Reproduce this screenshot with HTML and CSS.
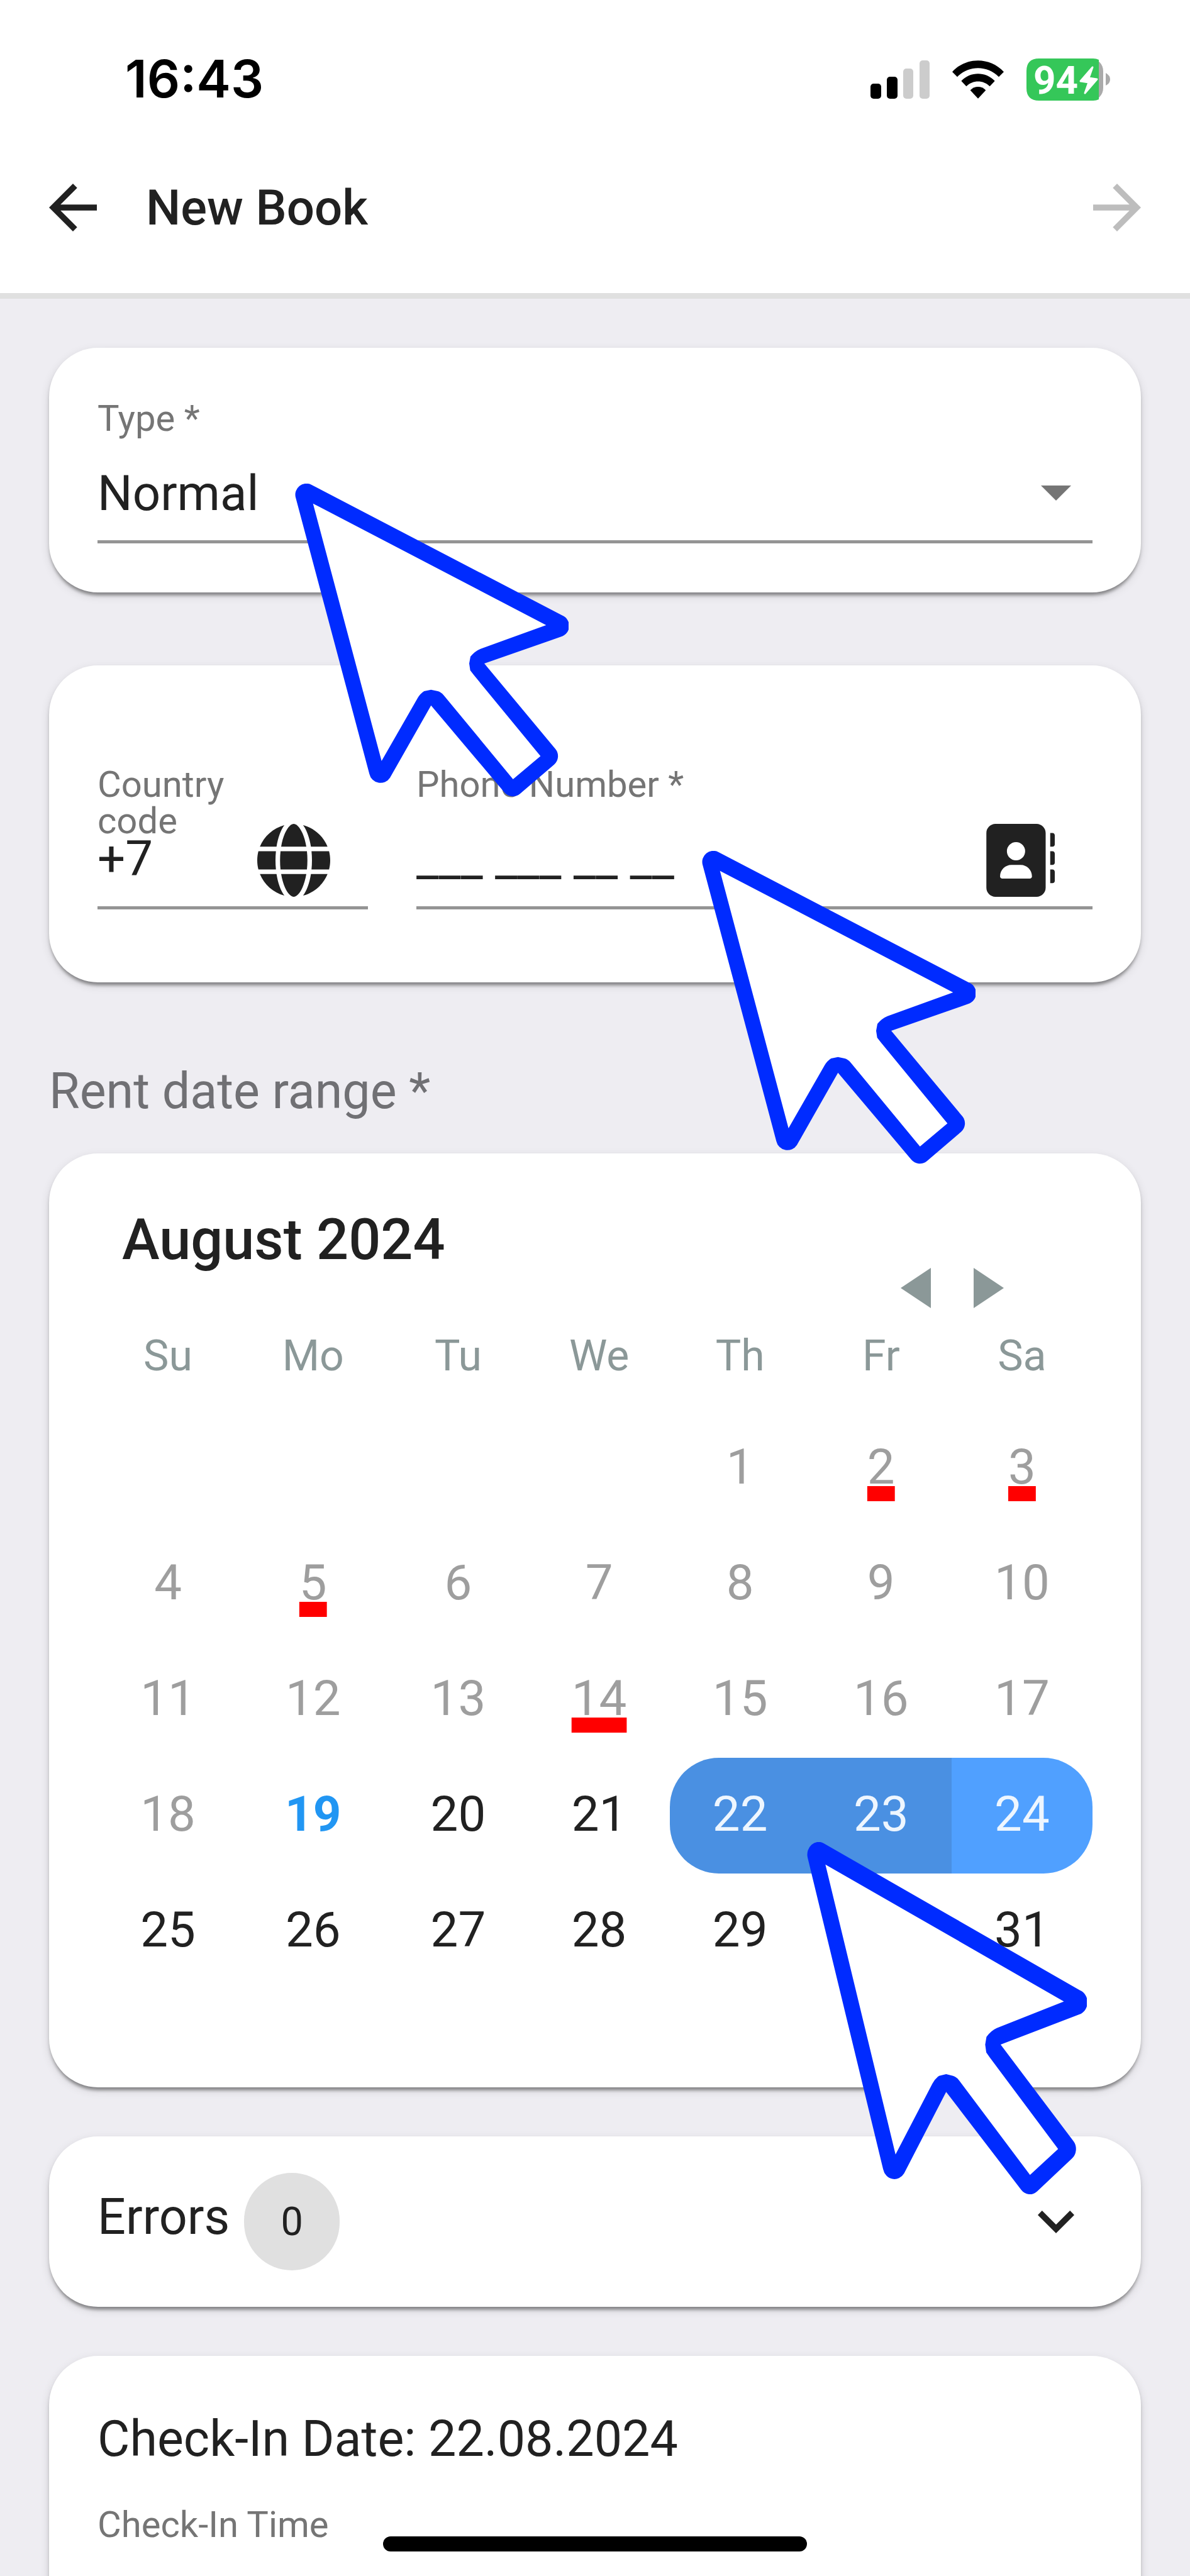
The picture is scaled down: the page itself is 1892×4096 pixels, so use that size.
FILE: index.html
```html
<!DOCTYPE html>
<html lang="en">
<head>
  <meta charset="UTF-8" />
  <meta name="viewport" content="width=device-width, initial-scale=1.0, viewport-fit=cover" />
  <title>New Book</title>
  <link rel="stylesheet" href="styles.css">
</head>
<body>

  <div class="page">

    <!-- Status bar -->
    <div class="status-bar">
      <span class="clock">16:43</span>
      <div class="status-icons">
        <svg class="signal" viewBox="0 0 94 61" aria-hidden="true">
          <rect x="0" y="37" width="17" height="24" rx="5" />
          <rect x="26" y="26" width="17" height="35" rx="5" />
          <rect x="52" y="13" width="16" height="48" rx="5" fill="#ccc" />
          <rect x="78" y="0" width="16" height="61" rx="5" fill="#ccc" />
        </svg>
        <svg class="wifi" viewBox="0 0 246 182" aria-hidden="true">
          <path d="M0 54C66-18 180-18 246 54L222 78C168 22 78 22 24 78Z" />
          <path d="M43 98C87 52 159 52 203 98L179 123C147 92 99 92 67 123Z" />
          <path d="M86 142C107 120 139 120 160 142L123 182Z" />
        </svg>
        <svg class="battery" viewBox="0 0 133 67" aria-hidden="true">
          <rect x="20" y="0" width="102" height="67" rx="20" fill="#aaa" />
          <path d="M20 0H106Q111 0 115 2V65Q111 67 106 67H20Q0 67 0 47V20Q0 0 20 0Z" fill="#35c759" />
          <path d="M126 23Q133 27 133 33Q133 40 126 43Z" fill="#aaa" />
          <text x="11" y="56" class="battery-level">94</text>
          <path d="M105 14L86 36L99 38L93 55L112 33L99 31Z" fill="#fff" stroke="#fff" stroke-width="3" stroke-linejoin="round" />
        </svg>
      </div>
    </div>

    <!-- Toolbar -->
    <header class="toolbar">
      <button class="icon-button" aria-label="Back">
        <svg width="76" height="76" viewBox="4 4 16 16"><path d="M20 11H7.83l5.59-5.59L12 4l-8 8 8 8 1.41-1.41L7.83 13H20v-2z" /></svg>
      </button>
      <h1>New Book</h1>
      <button class="icon-button" aria-label="Next" disabled>
        <svg width="76" height="76" viewBox="4 4 16 16"><path d="M12 4l-1.41 1.41L16.17 11H4v2h12.17l-5.58 5.59L12 20l8-8z" /></svg>
      </button>
    </header>

    <main>
      <section class="card">
        <label class="field-label type-label" for="type">Type *</label>
        <div class="select-box">
          <select id="type">
            <option>Normal</option>
          </select>
          <svg width="48" height="24" viewBox="0 0 48 24" aria-hidden="true"><path d="M0 0H48L24 24Z" /></svg>
        </div>
      </section>

      <section class="card phone-card">
        <div class="field country">
          <label class="field-label" for="country">Country code</label>
          <div class="input-box">
            <input id="country" type="text" value="+7">
            <button class="icon-button" aria-label="Choose country">
              <svg width="116" height="116" viewBox="0 0 512 512"><path d="M352 256c0 22.200-1.200 43.600-3.300 64H163.300c-2.200-20.400-3.300-41.800-3.300-64s1.200-43.600 3.300-64H348.700c2.200 20.400 3.300 41.800 3.300 64zm28.800-64H503.900c5.300 20.500 8.100 41.900 8.100 64s-2.800 43.500-8.100 64H380.800c2.100-20.600 3.200-42 3.200-64s-1.100-43.400-3.200-64zm112.600-32H376.700c-10-63.900-29.800-117.400-55.300-151.600c78.300 20.700 142 77.500 171.900 151.600zm-149.100 0H167.700c6.100-36.400 15.500-68.600 27-94.700c10.500-23.600 22.200-40.700 33.500-51.500C239.400 3.200 248.700 0 256 0s16.600 3.200 27.800 13.800c11.300 10.800 23 27.900 33.500 51.500c11.600 26 20.900 58.200 27 94.700zm-209 0H18.600C48.600 85.900 112.200 29.100 190.600 8.400C165.100 42.600 145.300 96.100 135.300 160zM8.100 192H131.200c-2.100 20.600-3.200 42-3.200 64s1.100 43.400 3.200 64H8.100C2.800 299.500 0 278.100 0 256s2.800-43.500 8.100-64zM194.700 446.600c-11.600-26-20.900-58.200-27-94.600H344.300c-6.100 36.400-15.500 68.600-27 94.600c-10.500 23.600-22.200 40.700-33.500 51.500C272.600 508.800 263.300 512 256 512s-16.600-3.200-27.800-13.800c-11.300-10.800-23-27.900-33.500-51.500zM135.300 352c10 63.900 29.800 117.400 55.300 151.600C112.200 482.900 48.600 426.100 18.600 352H135.300zm358.100 0c-30 74.100-93.600 130.900-171.900 151.600c25.500-34.200 45.200-87.700 55.300-151.600H493.400z" /></svg>
            </button>
          </div>
        </div>
        <div class="field phone">
          <label class="field-label" for="phone">Phone Number *</label>
          <div class="input-box">
            <input id="phone" type="tel" value="___ ___ __ __">
            <button class="icon-button" aria-label="Pick from contacts">
              <svg width="116" height="116" viewBox="0 0 512 512"><path d="M96 0C60.700 0 32 28.700 32 64V448c0 35.300 28.700 64 64 64H384c35.300 0 64-28.700 64-64V64c0-35.300-28.700-64-64-64H96zM208 288h64c44.200 0 80 35.800 80 80c0 8.800-7.200 16-16 16H144c-8.800 0-16-7.200-16-16c0-44.200 35.800-80 80-80zm-32-96a64 64 0 1 1 128 0a64 64 0 1 1-128 0zM480 64h16c8.800 0 16 7.200 16 16v64c0 8.800-7.200 16-16 16h-16zM480 192h16c8.800 0 16 7.200 16 16v64c0 8.800-7.200 16-16 16h-16zM480 320h16c8.800 0 16 7.200 16 16v64c0 8.800-7.200 16-16 16h-16z" fill-rule="evenodd" /></svg>
            </button>
          </div>
        </div>
      </section>

      <h2 class="section-title">Rent date range *</h2>

      <section class="card calendar">
        <div class="calendar-header">
          <h3>August 2024</h3>
          <div class="calendar-nav">
            <button class="icon-button" aria-label="Previous month">
              <svg width="48" height="64" viewBox="0 0 48 64"><path d="M48 0V64L0 32Z" /></svg>
            </button>
            <button class="icon-button" aria-label="Next month">
              <svg width="48" height="64" viewBox="0 0 48 64"><path d="M0 0V64L48 32Z" /></svg>
            </button>
          </div>
        </div>
        <table>
          <thead>
            <tr><th>Su</th><th>Mo</th><th>Tu</th><th>We</th><th>Th</th><th>Fr</th><th>Sa</th></tr>
          </thead>
          <tbody>
            <tr class="past">
              <td></td><td></td><td></td><td></td>
              <td><button>1</button></td>
              <td><button class="booked">2</button></td>
              <td><button class="booked">3</button></td>
            </tr>
            <tr class="past">
              <td><button>4</button></td>
              <td><button class="booked">5</button></td>
              <td><button>6</button></td>
              <td><button>7</button></td>
              <td><button>8</button></td>
              <td><button>9</button></td>
              <td><button>10</button></td>
            </tr>
            <tr class="past">
              <td><button>11</button></td>
              <td><button>12</button></td>
              <td><button>13</button></td>
              <td><button class="booked">14</button></td>
              <td><button>15</button></td>
              <td><button>16</button></td>
              <td><button>17</button></td>
            </tr>
            <tr>
              <td class="past"><button>18</button></td>
              <td class="today"><button>19</button></td>
              <td><button>20</button></td>
              <td><button>21</button></td>
              <td class="selected first"><button>22</button></td>
              <td class="selected"><button>23</button></td>
              <td class="selected last"><button>24</button></td>
            </tr>
            <tr>
              <td><button>25</button></td>
              <td><button>26</button></td>
              <td><button>27</button></td>
              <td><button>28</button></td>
              <td><button>29</button></td>
              <td><button>30</button></td>
              <td><button>31</button></td>
            </tr>
          </tbody>
        </table>
      </section>

      <section class="card errors">
        <span class="errors-title">Errors</span>
        <span class="chip">0</span>
        <button class="icon-button" aria-label="Show errors">
          <svg width="58" height="36" viewBox="6 8.590 12 7.410"><path d="M16.590 8.590L12 13.170 7.410 8.590 6 10l6 6 6-6z" /></svg>
        </button>
      </section>

      <section class="card check-in">
        <p class="check-in-date">Check-In Date: 22.08.2024</p>
        <span class="field-label">Check-In Time</span>
      </section>
    </main>

    <!-- Pointers over the form -->
    <svg width="0" height="0" class="pointer-defs" aria-hidden="true">
      <symbol id="pointer" viewBox="27 27 1305 1497" preserveAspectRatio="none">
        <path fill="#002bff" d="M30 92A53 53 0 0 1 105 32L1300 655A54 54 0 0 1 1297 757L930 885L1270 1294A53 53 0 0 1 1263 1367L1100 1507A53 53 0 0 1 1026 1500L676 1085L480 1430A54 54 0 0 1 382 1412Z" />
        <path fill="#fff" d="M113 122L1225 702L912 815Q885 826 864 852L858 885L863 918L880 940L1198 1327L1067 1437L737 1037Q722 1020 708 1017L676 1010L643 1017Q624 1029 612 1050L440 1350Z" />
      </symbol>
    </svg>
    <svg class="pointer pointer-type" aria-hidden="true"><use href="#pointer" width="100%" height="100%" /></svg>
    <svg class="pointer pointer-phone" aria-hidden="true"><use href="#pointer" width="100%" height="100%" /></svg>
    <svg class="pointer pointer-dates" aria-hidden="true"><use href="#pointer" width="100%" height="100%" /></svg>

    <div class="home-indicator"></div>
  </div>

</body>
</html>
```
FILE: styles.css
```css
* {
  box-sizing: border-box;
}
body {
  margin: 0;
  font-family: Roboto, "Liberation Sans", sans-serif;
  font-size: 78px;
  color: #212121;
  background: #eeedf2;
}
h1, h2, h3, p {
  margin: 0;
}
button, input, select {
  font: inherit;
  color: inherit;
  background: none;
  border: none;
  padding: 0;
  margin: 0;
}
svg {
  display: block;
  fill: currentColor;
}
.page {
  position: relative;
  height: 100vh;
  overflow: hidden;
}
.icon-button {
  flex: none;
  cursor: pointer;
}

/* Status bar */
.status-bar {
  display: flex;
  align-items: center;
  justify-content: space-between;
  height: 194px;
  padding: 58px 127px 0 199px;
  background: #fff;
  color: #000;
}
.clock {
  font-family: Inter, Roboto, sans-serif;
  font-size: 82px;
  line-height: 100px;
  font-weight: 600;
}
.status-icons {
  display: flex;
  align-items: center;
  gap: 36px;
}
.signal {
  width: 94px;
  height: 61px;
}
.wifi {
  width: 82px;
  height: 61px;
}
.battery {
  width: 133px;
  height: 67px;
  overflow: visible;
}
.battery-level {
  font-size: 62px;
  font-weight: 700;
  fill: #fff;
}

/* Toolbar */
.toolbar {
  display: flex;
  align-items: center;
  gap: 78px;
  padding: 0 78px;
  height: 281px;
  background: #fff;
  border-bottom: 9px solid #e0e0e0;
}
.toolbar h1 {
  flex: 1;
  font-size: 78px;
  font-weight: 500;
}
.toolbar .icon-button:disabled {
  color: #bdbdbd;
}

main {
  padding: 78px;
}

/* Cards */
.card {
  padding: 78px 77px;
  background: #fff;
  border-radius: 78px;
  box-shadow: 0 8px 5px -4px rgba(0, 0, 0, 0.28),
              0 5px 5px 0 rgba(0, 0, 0, 0.16),
              0 5px 15px 0 rgba(0, 0, 0, 0.12);
}

/* Form fields */
.field-label {
  display: block;
  font-size: 58px;
  line-height: 58px;
  color: #757575;
}
.type-label {
  line-height: 68px;
}
.select-box {
  display: flex;
  align-items: center;
  height: 165px;
  padding: 10px 34px 0 0;
  border-bottom: 5px solid #949494;
  color: #757575;
}
.select-box select {
  flex: 1;
  appearance: none;
  color: #212121;
}
.phone-card {
  display: flex;
  gap: 77px;
  margin-top: 116px;
  padding: 160px 77px 116px;
}
.phone-card .field-label {
  min-height: 116px;
}
.country {
  flex: none;
  width: 430px;
}
.country .field-label {
  max-width: 250px;
}
.phone {
  flex: 1;
  min-width: 0;
}
.input-box {
  display: flex;
  align-items: flex-start;
  height: 136px;
  margin-top: -24px;
  padding-right: 60px;
  border-bottom: 5px solid #949494;
}
.input-box input {
  flex: 1;
  min-width: 0;
  height: 110px;
}
.section-title {
  margin: 126px 0 52px;
  font-size: 79px;
  line-height: 94px;
  font-weight: 400;
  color: #707074;
}

/* Calendar */
.calendar {
  padding: 88px 77px 156px;
}
.calendar-header {
  display: flex;
  justify-content: space-between;
  height: 158px;
  padding: 0 141px 0 39px;
}
.calendar-header h3 {
  font-size: 90px;
  line-height: 100px;
  font-weight: 500;
}
.calendar-nav {
  display: flex;
  align-self: flex-end;
  gap: 68px;
  color: #8b9898;
}
.calendar table {
  width: 100%;
  table-layout: fixed;
  border-spacing: 0;
}
.calendar th {
  height: 163px;
  padding: 0 0 12px;
  font-size: 68px;
  font-weight: 400;
  color: #8b9898;
}
.calendar th:nth-child(2) {
  width: 15%;
}
.calendar td {
  height: 184px;
  padding: 0 0 5px;
  text-align: center;
}
.calendar td button {
  line-height: 92px;
}
.calendar .past {
  color: #9e9e9e;
}
.calendar .booked {
  text-decoration: underline 24px #f00;
  text-decoration-skip-ink: none;
  text-underline-offset: 4px;
}
.calendar .today {
  color: #2196f3;
  font-weight: 700;
}
.calendar .selected {
  color: #eef6ff;
  background: #4a90e2;
}
.calendar .first {
  border-radius: 78px 0 0 78px;
}
.calendar .last {
  background: #50a0ff;
  border-radius: 0 78px 78px 0;
}

/* Errors panel */
.errors {
  display: flex;
  align-items: center;
  gap: 23px;
  margin-top: 78px;
  padding: 58px 106px 58px 77px;
}
.errors-title {
  padding-bottom: 16px;
  font-size: 79px;
}
.chip {
  display: flex;
  align-items: center;
  justify-content: center;
  width: 152px;
  height: 155px;
  border-radius: 78px;
  background: #e0e0e0;
  font-size: 63px;
}
.errors .icon-button {
  margin-left: auto;
}

/* Check-in */
.check-in {
  min-height: 600px;
  margin-top: 78px;
}
.check-in-date {
  margin-bottom: 53px;
  font-size: 79px;
  line-height: 108px;
}

/* Pointers */
.pointer-defs {
  position: absolute;
}
.pointer {
  position: absolute;
  width: 435px;
  height: 499px;
}
.pointer-type {
  left: 469px;
  top: 769px;
}
.pointer-phone {
  left: 1116px;
  top: 1353px;
}
.pointer-dates {
  left: 1283px;
  top: 2929px;
  width: 445px;
  height: 562px;
}

.home-indicator {
  position: fixed;
  bottom: 39px;
  left: 50%;
  width: 674px;
  height: 24px;
  margin-left: -337px;
  border-radius: 12px;
  background: #000;
}
```
